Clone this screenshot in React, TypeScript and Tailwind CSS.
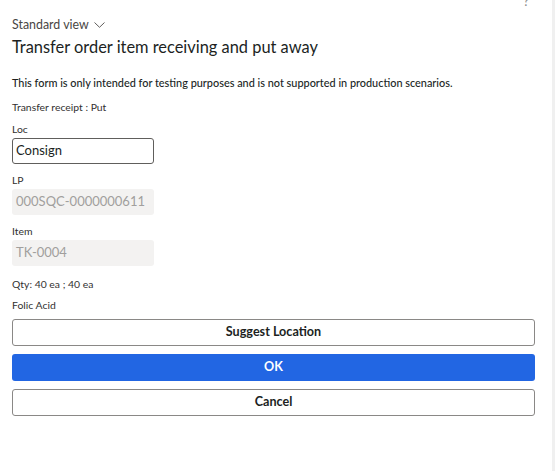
import React from "react";

export default function App() {
  return (
    <div className="flex min-h-[471px] w-[555px] bg-white" style={{ fontFamily: 'Lato, "Noto Sans", sans-serif' }}>
      <div className="flex w-[552px] flex-col pl-[12px] pr-[17px]">
        <div className="flex h-[8px] justify-end overflow-hidden pr-[6px]">
          <span className="mt-[-7px] text-[13px] leading-[16px] text-[#8a8a8a]">?</span>
        </div>
        <div className="mt-[8px] flex h-[18px] items-center gap-[5px] text-[12.4px] font-normal leading-[18px] text-[#484644]">
          <span>Standard view</span>
          <svg width="11" height="6" viewBox="0 0 11 6" fill="none" stroke="#605e5c" strokeWidth="1">
            <path d="M0.5 0.5 L5.5 5.3 L10.5 0.5" />
          </svg>
        </div>
        <div className="mt-[1px] whitespace-nowrap text-[16.4px] leading-[24px] text-[#201f1e]">Transfer order item receiving and put away</div>
        <div className="mt-[16px] whitespace-nowrap text-[10.9px] font-medium leading-[16px] text-[#201f1e]">
          This form is only intended for testing purposes and is not supported in production scenarios.
        </div>
        <div className="mt-[8px] text-[10.4px] leading-[16px] text-[#323130]">Transfer receipt : Put</div>
        <div className="mt-[7px] text-[10.4px] leading-[15px] text-[#323130]">Loc</div>
        <div className="mt-[1px] flex h-[26px] w-[142px] items-center rounded-[3px] border border-[#605e5c] px-[3px] text-[13px] text-[#201f1e]">
          Consign
        </div>
        <div className="mt-[9px] text-[10.4px] leading-[15px] text-[#323130]">LP</div>
        <div className="mt-[1px] flex h-[26px] w-[142px] items-center whitespace-nowrap rounded-[3px] bg-[#f3f2f1] px-[4px] text-[13px] text-[#a19f9d]">
          000SQC-0000000611
        </div>
        <div className="mt-[9px] text-[10.4px] leading-[15px] text-[#323130]">Item</div>
        <div className="mt-[1px] flex h-[26px] w-[142px] items-center rounded-[3px] bg-[#f3f2f1] px-[4px] text-[13px] text-[#a19f9d]">
          TK-0004
        </div>
        <div className="mt-[10px] text-[10.4px] leading-[16px] text-[#323130]">Qty: 40 ea ; 40 ea</div>
        <div className="mt-[5px] text-[10.4px] leading-[16px] text-[#323130]">Folic Acid</div>
        <div className="mt-[6px] flex flex-col gap-[8px]">
          <button className="flex h-[27px] items-center justify-center rounded-[3px] border border-[#8a8886] bg-white text-[12.6px] font-bold text-[#201f1e]">
            Suggest Location
          </button>
          <button className="flex h-[27px] items-center justify-center rounded-[3px] bg-[#2266e3] text-[12.6px] font-bold text-white">
            OK
          </button>
          <button className="flex h-[27px] items-center justify-center rounded-[3px] border border-[#8a8886] bg-white text-[12.6px] font-bold text-[#201f1e]">
            Cancel
          </button>
        </div>
      </div>
      <div className="w-[3px] bg-[#f0f0f0]" />
    </div>
  );
}
